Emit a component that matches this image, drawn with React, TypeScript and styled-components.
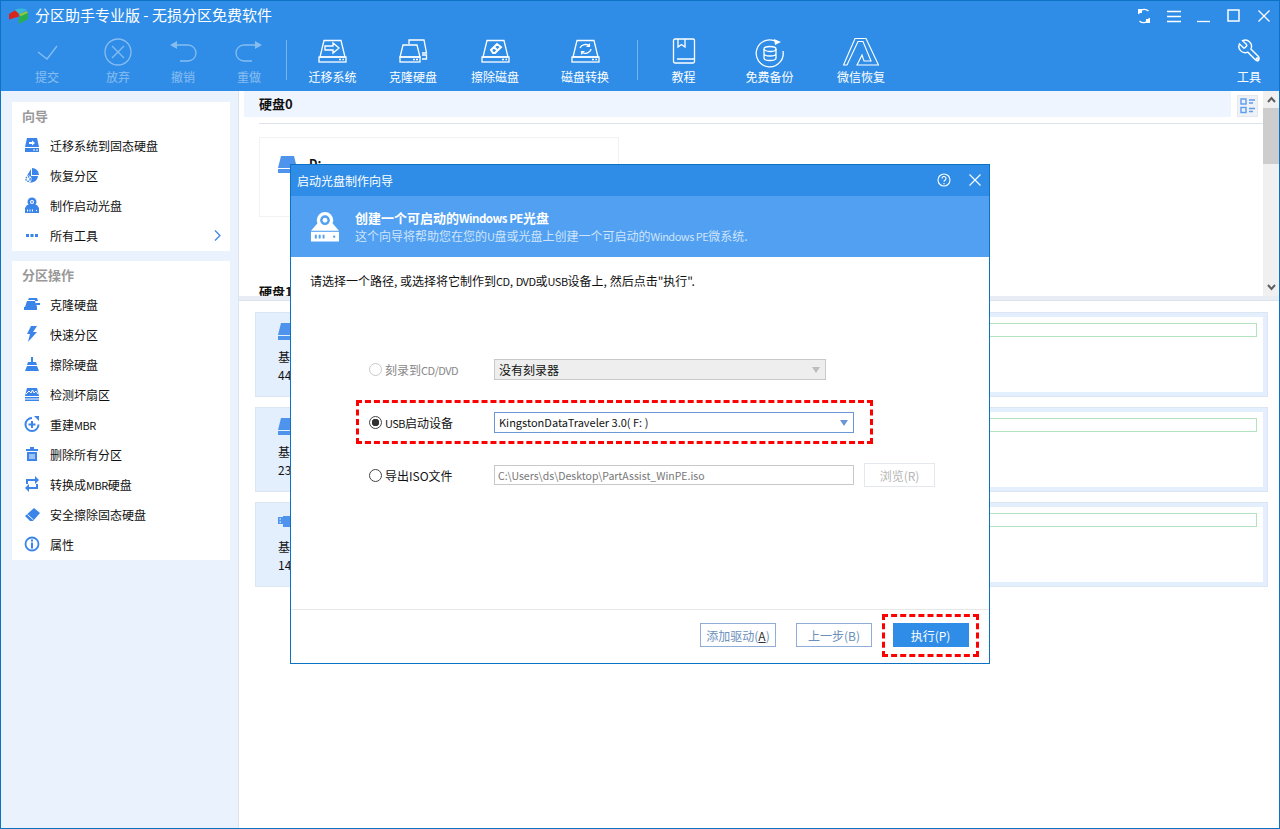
import * as React from 'react';
import styled, { createGlobalStyle } from 'styled-components';

const BLUE = '#2f8de8';
const ICON_BLUE = '#3a84ea';
const FONT = '"Noto Sans CJK SC", "Liberation Sans", sans-serif';

const GlobalStyle = createGlobalStyle`
    html, body { margin: 0; padding: 0; background: #fff; }
    * { box-sizing: border-box; }
    body { font-family: ${FONT}; font-size: 12px; color: #111; }
`;

// latin runs sit narrower than the CJK around them
const Lat = styled.span`
    font-size: 11px;
    letter-spacing: -0.5px;
`;

const mixed = (text: string) =>
    text.split(/([A-Za-z/]+(?: [A-Z]+)?)/).map((part, i) => (i % 2 ? <Lat key={i}>{part}</Lat> : part));

const Line: React.FC<{ w: number; h: number; sw?: number; children: React.ReactNode }> = ({ w, h, sw = 1.3, children }) => (
    <svg width={w} height={h} viewBox={`0 0 ${w} ${h}`} fill="none" stroke="#fff" strokeWidth={sw}>
        {children}
    </svg>
);

const DiskBase = () => (
    <>
        <path d="M6 1.5h17L27 18H2z" />
        <rect x="1" y="18" width="27" height="5" />
        <path d="M21 20.5h2M24.5 20.5h1.5" />
    </>
);

const toolbarGroups = [
    { label: '提交', w: 70, disabled: true, icon: <Line w={28} h={28}><path d="M1 11l9 7L20 5" transform="translate(4 3)" /></Line> },
    { label: '放弃', w: 72, disabled: true, icon: <Line w={28} h={28}><circle cx="14" cy="14" r="13" /><path d="M8 8l12 12M20 8L8 20" /></Line> },
    { label: '撤销', w: 58, disabled: true, icon: <Line w={28} h={28}><path d="M7 7h12a8 8 0 0 1 0 16h-8" /><path d="M8 3v8L1 7z" fill="#fff" stroke="none" /></Line> },
    { label: '重做', w: 74, disabled: true, icon: <Line w={28} h={28}><path d="M21 7H9a8 8 0 0 0 0 16h8" /><path d="M20 3v8l7-4z" fill="#fff" stroke="none" /></Line> },
];

const toolbarDisks = [
    { label: '迁移系统', w: 91, icon: <Line w={29} h={28}><g transform="translate(0 1)"><DiskBase /><path d="M7 7h8V4l6 5-6 5v-3H7z" /></g></Line> },
    { label: '克隆硬盘', w: 70, icon: <Line w={29} h={28}><path d="M10 6V2h15l2.5 13H23M23 17h4.500v4H23" /><path d="M4 7h14l3 12H1z" /><rect x="1" y="19" width="20" height="5" /><path d="M14 21.500h2M17 21.500h2" /></Line> },
    { label: '擦除磁盘', w: 94, icon: <Line w={29} h={28}><g transform="translate(0 1)"><DiskBase /><path d="M10 11l6-6 4 3-6 6h-2zM13 8l3 3" strokeWidth="2" /></g></Line> },
    { label: '磁盘转换', w: 86, icon: <Line w={29} h={28}><g transform="translate(0 1)"><DiskBase /><path d="M9 9a6 5 0 0 1 10-2M20 10a6 5 0 0 1-10 3" /><path d="M19 4v4h-4zM10 16v-4h4z" fill="#fff" stroke="none" /></g></Line> },
];

const toolbarExtras = [
    { label: '教程', w: 91, icon: <Line w={24} h={26}><path d="M3 1h18a1.5 1.5 0 0 1 1.5 1.5v21a1.5 1.5 0 0 1-1.5 1.5H3A1.5 1.5 0 0 1 1.5 23.500v-21A1.500 1.500 0 0 1 3 1z" /><path d="M6 1v8l3.500-2.500L13 9V1M5 21h17" /></Line> },
    { label: '免费备份', w: 81, icon: <Line w={30} h={30}><path d="M22 4a13.500 13.500 0 1 0 6 9" /><path d="M19 1l7 3-6 3z" fill="#fff" stroke="none" /><ellipse cx="15" cy="11" rx="6" ry="2.500" /><path d="M9 11v9c0 1.300 2.700 2.500 6 2.500s6-1.200 6-2.500v-9M9 15.500c0 1.300 2.700 2.500 6 2.500s6-1.200 6-2.500" /></Line> },
    { label: '微信恢复', w: 102, icon: <Line w={36} h={28} sw={1.1}><path d="M12 .5h11L35.500 27H14l5-10 2 6h7L20 3.500h-5L4 27H.5z" /></Line> },
];

const SideIcon: React.FC<{ children: React.ReactNode }> = ({ children }) => (
    <svg width="16" height="16" viewBox="0 0 16 16" fill={ICON_BLUE}>
        {children}
    </svg>
);

const guideRows = [
    { label: '迁移系统到固态硬盘', icon: <SideIcon><path d="M3 1h10l2 9H1z" /><rect x="1" y="11" width="14" height="4" /><path d="M5 5h3V3.500L11 6 8 8.500V7H5z" fill="#fff" /><path d="M9 13h2M12 13h2" stroke="#fff" /></SideIcon> },
    { label: '恢复分区', icon: <SideIcon><path d="M8 1a7 7 0 0 1 7 7H8z" /><path d="M7 2v7h7a7 7 0 0 1-13 3z" /><circle cx="4" cy="12" r="3.500" fill="#fff" /><circle cx="4" cy="12" r="2.200" fill="none" stroke={ICON_BLUE} strokeWidth="1.400" strokeDasharray="1.500 .8" /></SideIcon> },
    { label: '制作启动光盘', icon: <SideIcon><path d="M3 8h10l2 3H1z" /><circle cx="8" cy="5" r="4.500" /><circle cx="8" cy="5" r="2" fill="#fff" /><circle cx="8" cy="5" r=".9" /><rect x="1" y="11" width="14" height="5" /><path d="M3.500 12.500v2M6 12.500v2M8.500 12.500v2M12 13.500h1" stroke="#fff" /></SideIcon> },
    { label: '所有工具', icon: <SideIcon><rect x="2" y="7" width="3" height="3" /><rect x="6.500" y="7" width="3" height="3" /><rect x="11" y="7" width="3" height="3" /></SideIcon>, more: true },
];

const partitionRows = [
    { label: '克隆硬盘', icon: <SideIcon><path d="M5 2h8l1 3h-3V4H4z" /><path d="M3 5h8l2 6H1z" /><rect x="0" y="11" width="13" height="3" /><rect x="12" y="7" width="4" height="2" /></SideIcon> },
    { label: '快速分区', icon: <SideIcon><path d="M7 0h6L9 6h4L4 16l2-8H3z" /></SideIcon> },
    { label: '擦除硬盘', icon: <SideIcon><path d="M7 1h2v5h3l1 3H3l1-3h3z" /><path d="M3 10h10l2 5H1z" /></SideIcon> },
    { label: '检测坏扇区', icon: <SideIcon><path d="M3 2h10l2 8H1zM1 11h14v1.500H1zM1 13.500h14V15H1z" /><path d="M2 8l3-3 2 2 1.500-3L10 7l2-2 2 3" fill="none" stroke="#fff" /></SideIcon> },
    { label: '重建MBR', icon: <SideIcon><path d="M8 2a6.500 6.500 0 1 0 6.500 6.500" fill="none" stroke={ICON_BLUE} strokeWidth="2" /><path d="M10 0h5v5z" /><path d="M7 5h2v2.500h2.500v2H9V12H7V9.500H4.500v-2H7z" /></SideIcon> },
    { label: '删除所有分区', icon: <SideIcon><rect x="6" y="1" width="4" height="2" /><rect x="2" y="3" width="12" height="2" /><path d="M3 6h10v9H3z" /><path d="M6 8v5M8 8v5M10 8v5" stroke="#fff" /></SideIcon> },
    { label: '转换成MBR硬盘', icon: <SideIcon><path d="M2 3h9V0l4 4-4 4V5H4v3H2zM14 13H5v3l-4-4 4-4v3h7V8h2z" /></SideIcon> },
    { label: '安全擦除固态硬盘', icon: <SideIcon><path d="M10 2l6 5-7 8H6l-5-5z" /><path d="M3.500 8.500l6 5.500" stroke="#fff" fill="none" /></SideIcon> },
    { label: '属性', icon: <SideIcon><circle cx="8" cy="8" r="6.500" fill="none" stroke={ICON_BLUE} strokeWidth="1.800" /><rect x="7" y="3.500" width="2" height="2" /><rect x="7" y="6.500" width="2" height="6" /></SideIcon> },
];

const DiskGlyph: React.FC<{ usb?: boolean }> = ({ usb }) => (
    <GlyphSvg width="19" height="17" viewBox="0 0 19 17" fill="#4e93ec">
        {usb ? (
            <>
                <rect x="0" y="4" width="5" height="7" />
                <rect x="5" y="3" width="14" height="11" />
                <path d="M1.500 6h1.500M1.500 9h1.500" stroke="#fff" />
            </>
        ) : (
            <>
                <path d="M3 0h13l3 12H0z" />
                <rect x="0" y="13" width="19" height="4" />
            </>
        )}
    </GlyphSvg>
);

const bottomDisks = [
    { type: '基本GPT', size: '447.13GB' },
    { type: '基本MBR', size: '232.89GB' },
    { type: '基本MBR', size: '14.41GB', usb: true },
];

const App: React.FC = () => (
    <Window>
        <GlobalStyle />
        <Header>
            <TitleBar>
                <Logo width="21" height="16" viewBox="0 0 21 16">
                    <path d="M6 3l4-1.500 1 7-10 3V6z" fill="#d9261c" />
                    <path d="M7 2c3-2 9-2 12 0l-8 4z" fill="#39b7d8" />
                    <path d="M11 6l8-3 1 2-7 4z" fill="#8cc63f" />
                    <path d="M11 9l9-4v6l-9 5z" fill="#27ae4f" />
                </Logo>
                <AppTitle>分区助手专业版 - 无损分区免费软件</AppTitle>
                <WindowControls>
                    <ControlSlot>
                        <Line w={16} h={16}>
                            <path d="M2.500 6a6 6 0 0 1 10-3M13.500 10a6 6 0 0 1-10 3" />
                            <path d="M2 1h4v4H2zM10 11h4v4h-4z" fill="#fff" stroke="none" />
                        </Line>
                    </ControlSlot>
                    <ControlSlot>
                        <Line w={14} h={14}><path d="M0 2.500h14M0 7.500h14M0 12.500h14" /></Line>
                    </ControlSlot>
                    <ControlSlot>
                        <Line w={14} h={14}><path d="M0 12.500h13" /></Line>
                    </ControlSlot>
                    <ControlSlot>
                        <Line w={14} h={14} sw={1.5}><rect x="1" y="1" width="11" height="11" /></Line>
                    </ControlSlot>
                    <ControlSlot>
                        <Line w={12} h={12}><path d="M.5.500l11 11M11.500.500l-11 11" /></Line>
                    </ControlSlot>
                </WindowControls>
            </TitleBar>
            <Toolbar>
                {toolbarGroups.map((t) => (
                    <ToolItem key={t.label} $w={t.w} $disabled={t.disabled}>
                        <ToolIcon>{t.icon}</ToolIcon>
                        {t.label}
                    </ToolItem>
                ))}
                <ToolDivider />
                {toolbarDisks.map((t) => (
                    <ToolItem key={t.label} $w={t.w}>
                        <ToolIcon>{t.icon}</ToolIcon>
                        {t.label}
                    </ToolItem>
                ))}
                <ToolDivider $gap={9} />
                {toolbarExtras.map((t) => (
                    <ToolItem key={t.label} $w={t.w}>
                        <ToolIcon>{t.icon}</ToolIcon>
                        {t.label}
                    </ToolItem>
                ))}
                <ToolSpacer />
                <ToolItem $w={60}>
                    <ToolIcon>
                        <Line w={26} h={26}>
                            <g transform="translate(26 0) scale(-1.05 1.05)">
                                <path d="M14.700 6.300a1 1 0 0 0 0 1.400l1.600 1.600a1 1 0 0 0 1.400 0l3.770-3.770a6 6 0 0 1-7.940 7.940l-6.910 6.910a2.120 2.120 0 0 1-3-3l6.910-6.910a6 6 0 0 1 7.940-7.940l-3.760 3.760z" />
                            </g>
                            <circle cx="21.500" cy="21.500" r="1.500" />
                        </Line>
                    </ToolIcon>
                    工具
                </ToolItem>
            </Toolbar>
        </Header>

        <Main>
            <Sidebar>
                <SidePanel>
                    <SideHeading>向导</SideHeading>
                    {guideRows.map((r) => (
                        <SideRow key={r.label}>
                            {r.icon}
                            <span>{mixed(r.label)}</span>
                            {r.more && (
                                <Chevron width="7" height="11" viewBox="0 0 7 11">
                                    <path d="M1 .500l5 5-5 5" fill="none" stroke={ICON_BLUE} strokeWidth="1.200" />
                                </Chevron>
                            )}
                        </SideRow>
                    ))}
                </SidePanel>
                <SidePanel>
                    <SideHeading>分区操作</SideHeading>
                    {partitionRows.map((r) => (
                        <SideRow key={r.label}>
                            {r.icon}
                            <span>{mixed(r.label)}</span>
                        </SideRow>
                    ))}
                </SidePanel>
            </Sidebar>

            <Content>
                <TopPane>
                    <TopScroll>
                        <DiskHeader>
                            <DiskStrip>
                                <DiskTitle>硬盘0</DiskTitle>
                            </DiskStrip>
                            <ViewToggle>
                                <svg width="16" height="16" viewBox="0 0 16 16" fill="none" stroke="#5b9bf0" strokeWidth="1.400">
                                    <rect x="1" y="1" width="5" height="5" />
                                    <rect x="1" y="9.500" width="5" height="5" />
                                    <path d="M9 2h6M9 5h4M9 10.500h6M9 13.500h4" />
                                </svg>
                            </ViewToggle>
                        </DiskHeader>
                        <StripRule />
                        <VolumeCard>
                            <DiskGlyph />
                            <VolumeName>D:</VolumeName>
                        </VolumeCard>
                        <SecondTitle>硬盘1</SecondTitle>
                    </TopScroll>
                    <ScrollBar>
                        <ScrollArrow>
                            <svg width="9" height="7" viewBox="0 0 9 7"><path d="M1 6l3.500-4L8 6" fill="none" stroke="#606060" strokeWidth="2" /></svg>
                        </ScrollArrow>
                        <ScrollThumb />
                        <ScrollArrow>
                            <svg width="9" height="7" viewBox="0 0 9 7"><path d="M1 1l3.500 4L8 1" fill="none" stroke="#606060" strokeWidth="2" /></svg>
                        </ScrollArrow>
                    </ScrollBar>
                </TopPane>
                <Splitter />
                <BottomPane>
                    {bottomDisks.map((d, i) => (
                        <DiskCard key={i}>
                            <DiskInfo>
                                <DiskGlyph usb={d.usb} />
                                <DiskType>{d.type}</DiskType>
                                <DiskSize>{d.size}</DiskSize>
                            </DiskInfo>
                            <DiskBody>
                                <PartitionBar />
                            </DiskBody>
                        </DiskCard>
                    ))}
                </BottomPane>
            </Content>
        </Main>

        <Dialog>
            <DialogTitle>
                启动光盘制作向导
                <DialogControls>
                    <svg width="14" height="14" viewBox="0 0 14 14" fill="none" stroke="#fff" strokeWidth="1.100">
                        <circle cx="7" cy="7" r="6" />
                        <path d="M5 5.500a2 2 0 1 1 3 1.700c-.7.400-1 .8-1 1.500" />
                        <path d="M7 10v1.300" />
                    </svg>
                    <svg width="12" height="12" viewBox="0 0 12 12" fill="none" stroke="#fff" strokeWidth="1.100">
                        <path d="M.5.500l11 11M11.500.500l-11 11" />
                    </svg>
                </DialogControls>
            </DialogTitle>
            <DialogBanner>
                <svg width="30" height="31" viewBox="0 0 31 31" fill="#fff">
                    <path d="M8 12h15l7 8H1z" />
                    <circle cx="15.500" cy="9" r="8.500" fill="#fff" />
                    <circle cx="15.500" cy="9" r="5" fill="#51a0f2" />
                    <circle cx="15.500" cy="9" r="2.500" fill="#fff" />
                    <rect x="1" y="21" width="29" height="10" />
                    <path d="M6 24v4M10 24v4M14 24v4" stroke="#51a0f2" strokeWidth="2" />
                    <circle cx="25" cy="26" r="1.200" fill="#51a0f2" />
                </svg>
                <BannerText>
                    <BannerTitle>{mixed('创建一个可启动的Windows PE光盘')}</BannerTitle>
                    <BannerSub>{mixed('这个向导将帮助您在您的U盘或光盘上创建一个可启动的Windows PE微系统.')}</BannerSub>
                </BannerText>
            </DialogBanner>
            <DialogBody>
                <Intro>{mixed('请选择一个路径, 或选择将它制作到CD, DVD或USB设备上, 然后点击"执行".')}</Intro>
                <OptionRow $h={21} $top={69}>
                    <Radio $disabled />
                    <OptionLabel $disabled>{mixed('刻录到CD/DVD')}</OptionLabel>
                    <SelectBox $w={332} $disabled>
                        没有刻录器
                        <Caret $color="#bdbdbd" />
                    </SelectBox>
                </OptionRow>
                <OptionRow $h={44} $top={20} $highlight>
                    <Radio $checked />
                    <OptionLabel>{mixed('USB启动设备')}</OptionLabel>
                    <SelectBox $w={360} $active>
                        <DeviceName>KingstonDataTraveler 3.0( F: )</DeviceName>
                        <Caret $color="#6b97d8" />
                    </SelectBox>
                </OptionRow>
                <OptionRow $h={24} $top={19}>
                    <Radio />
                    <OptionLabel>导出ISO文件</OptionLabel>
                    <PathInput>C:\Users\ds\Desktop\PartAssist_WinPE.iso</PathInput>
                    <BrowseButton>浏览(R)</BrowseButton>
                </OptionRow>
            </DialogBody>
            <DialogFooter>
                <OutlineButton>添加驱动(<u>A</u>)</OutlineButton>
                <OutlineButton>上一步(B)</OutlineButton>
                <ExecuteFrame>
                    <ExecuteButton>执行(P)</ExecuteButton>
                </ExecuteFrame>
            </DialogFooter>
        </Dialog>
    </Window>
);

const Window = styled.div`
    position: relative;
    width: 1280px;
    height: 829px;
    display: flex;
    flex-direction: column;
    overflow: hidden;
    background: #fff;
    border: 1px solid #0b72c4;
`;

const Header = styled.header`
    height: 90px;
    flex: none;
    background: ${BLUE};
    display: flex;
    flex-direction: column;
`;

const TitleBar = styled.div`
    height: 30px;
    flex: none;
    display: flex;
    align-items: center;
    padding-left: 7px;
`;

const Logo = styled.svg`
    flex: none;
`;

const AppTitle = styled.div`
    margin-left: 6px;
    padding-bottom: 4px;
    font-size: 15px;
    color: #fff;
`;

const WindowControls = styled.div`
    margin-left: auto;
    display: flex;
    align-items: center;
`;

const ControlSlot = styled.div`
    width: 30px;
    display: flex;
    align-items: center;
    justify-content: center;
`;

const Toolbar = styled.div`
    flex: 1;
    display: flex;
    padding-left: 11px;
`;

const ToolItem = styled.div<{ $w: number; $disabled?: boolean }>`
    width: ${(p) => p.$w}px;
    flex: none;
    display: flex;
    flex-direction: column;
    align-items: center;
    color: #fff;
    font-size: 12px;
    line-height: 16px;
    opacity: ${(p) => (p.$disabled ? 0.42 : 1)};
`;

const ToolIcon = styled.div`
    height: 38px;
    padding-top: 7px;
    display: flex;
    align-items: flex-start;
    justify-content: center;
`;

const ToolDivider = styled.div<{ $gap?: number }>`
    width: 1px;
    height: 40px;
    margin-top: 9px;
    margin-left: ${(p) => p.$gap ?? 0}px;
    background: rgba(255, 255, 255, 0.35);
    flex: none;
`;

const ToolSpacer = styled.div`
    flex: 1;
`;

const Main = styled.div`
    flex: 1;
    min-height: 0;
    display: flex;
`;

const Sidebar = styled.aside`
    width: 238px;
    flex: none;
    background: #eaf2fd;
    border-right: 1px solid #dde4ee;
    padding: 11px 8px 0 11px;
    display: flex;
    flex-direction: column;
    gap: 10px;
`;

const SidePanel = styled.section`
    background: #fff;
`;

const SideHeading = styled.div`
    height: 29px;
    padding: 0 0 2px 10px;
    display: flex;
    align-items: center;
    font-size: 13px;
    font-weight: 700;
    color: #999;
`;

const SideRow = styled.div`
    height: 30px;
    padding: 0 0 2px 12px;
    display: flex;
    align-items: center;
    gap: 10px;
    font-size: 12px;
    color: #111;
`;

const Chevron = styled.svg`
    margin-left: auto;
    margin-right: 9px;
`;

const Content = styled.div`
    flex: 1;
    min-width: 0;
    display: flex;
    flex-direction: column;
`;

const TopPane = styled.div`
    height: 205px;
    flex: none;
    display: flex;
    overflow: hidden;
`;

const TopScroll = styled.div`
    flex: 1;
    min-width: 0;
    padding-left: 5px;
`;

const DiskHeader = styled.div`
    height: 26px;
    display: flex;
`;

const DiskStrip = styled.div`
    flex: 1;
    padding-left: 15px;
    display: flex;
    align-items: center;
    background: #eef5fe;
`;

const DiskTitle = styled.div`
    font-weight: 700;
    font-size: 13px;
    line-height: 18px;
`;

const ViewToggle = styled.div`
    width: 21px;
    height: 22px;
    margin: 4px 5px 0 6px;
    background: #eef1f6;
    border: 1px solid #e4e8ee;
    display: flex;
    align-items: center;
    justify-content: center;
`;

const StripRule = styled.div`
    height: 1px;
    margin: 6px 0 0 15px;
    background: #dfe3ea;
`;

const VolumeCard = styled.div`
    width: 360px;
    height: 80px;
    margin: 13px 0 0 15px;
    padding: 18px 0 0 18px;
    border: 1px solid #f2f2f2;
    display: flex;
    align-items: flex-start;
    gap: 12px;
`;

const VolumeName = styled.div`
    font-weight: 700;
    font-size: 12px;
    line-height: 14px;
`;

const SecondTitle = styled(DiskTitle)`
    margin: 66px 0 0 15px;
`;

const ScrollBar = styled.div`
    width: 16px;
    flex: none;
    background: #f0f0f0;
    display: flex;
    flex-direction: column;
`;

const ScrollArrow = styled.div`
    height: 17px;
    flex: none;
    display: flex;
    align-items: center;
    justify-content: center;
`;

const ScrollThumb = styled.div`
    height: 56px;
    background: #cdcdcd;
    margin-bottom: auto;
`;

const Splitter = styled.div`
    height: 5px;
    flex: none;
    background: #e8edf3;
    border-bottom: 1px solid #dbe3ee;
`;

const BottomPane = styled.div`
    flex: 1;
    padding: 11px 11px 0 16px;
    display: flex;
    flex-direction: column;
    gap: 10px;
`;

const DiskCard = styled.div`
    height: 85px;
    flex: none;
    display: flex;
    border: 1px solid #dce6f2;
    background: #e4effd;
`;

const DiskInfo = styled.div`
    width: 120px;
    flex: none;
    padding: 10px 0 0 22px;
`;

const GlyphSvg = styled.svg`
    display: block;
    flex: none;
`;

const DiskType = styled.div`
    margin-top: 8px;
    line-height: 18px;
    font-size: 12px;
`;

const DiskSize = styled.div`
    line-height: 18px;
    font-size: 12px;
`;

const DiskBody = styled.div`
    flex: 1;
    margin: 4px 4px 4px 0;
    padding: 6px;
    background: #fff;
`;

const PartitionBar = styled.div`
    height: 14px;
    border: 1px solid #b2e3bf;
`;

const Dialog = styled.div`
    position: absolute;
    left: 289px;
    top: 163px;
    width: 700px;
    height: 500px;
    background: #fff;
    border: 1px solid #0b72c4;
    display: flex;
    flex-direction: column;
`;

const DialogTitle = styled.div`
    height: 31px;
    flex: none;
    padding-left: 6px;
    background: ${BLUE};
    color: #fff;
    font-size: 12px;
    display: flex;
    align-items: center;
`;

const DialogControls = styled.div`
    margin-left: auto;
    padding: 0 8px 1px 0;
    display: flex;
    align-items: center;
    gap: 18px;
`;

const DialogBanner = styled.div`
    height: 61px;
    flex: none;
    background: #51a0f2;
    padding-left: 19px;
    display: flex;
    align-items: center;
    gap: 15px;
`;

const BannerText = styled.div`
    display: flex;
    flex-direction: column;
    color: #fff;
    font-size: 12px;
    line-height: 18px;
`;

const BannerTitle = styled.div`
    height: 18px;
    font-size: 13px;
    font-weight: 700;

    ${Lat} {
        font-size: 11.500px;
    }
`;

const BannerSub = styled.div`
    height: 18px;
    color: #cfe4fb;
`;

const DialogBody = styled.div`
    flex: 1;
    padding: 15px 0 0 19px;
`;

const Intro = styled.div`
    height: 18px;
    font-size: 12px;
    line-height: 18px;
`;

const OptionRow = styled.div<{ $h: number; $top: number; $highlight?: boolean }>`
    width: 517px;
    height: ${(p) => p.$h}px;
    margin: ${(p) => p.$top}px 0 0 46px;
    padding-left: ${(p) => (p.$highlight ? 10 : 13)}px;
    display: flex;
    align-items: center;
    border: ${(p) => (p.$highlight ? '3px dashed #f00' : 'none')};
    white-space: nowrap;
`;

const Radio = styled.span<{ $checked?: boolean; $disabled?: boolean }>`
    width: 13px;
    height: 13px;
    flex: none;
    border-radius: 50%;
    border: 1px solid ${(p) => (p.$disabled ? '#c9c9c9' : '#444')};
    background: ${(p) => (p.$checked ? 'radial-gradient(circle, #333 0 3.500px, #fff 4px)' : '#fff')};
`;

const OptionLabel = styled.span<{ $disabled?: boolean }>`
    width: 109px;
    margin-left: 3px;
    flex: none;
    font-size: 12px;
    color: ${(p) => (p.$disabled ? '#888' : '#111')};
`;

const SelectBox = styled.div<{ $w: number; $disabled?: boolean; $active?: boolean }>`
    position: relative;
    width: ${(p) => p.$w}px;
    height: 21px;
    flex: none;
    padding-left: 4px;
    display: flex;
    align-items: center;
    font-size: 12px;
    background: ${(p) => (p.$disabled ? '#eeeeee' : '#fff')};
    border: 1px solid ${(p) => (p.$active ? '#6b97d8' : '#c8c8c8')};
`;

const DeviceName = styled.span`
    font-size: 11px;
`;

const Caret = styled.span<{ $color: string }>`
    position: absolute;
    right: 5px;
    top: 7px;
    border-left: 4.500px solid transparent;
    border-right: 4.500px solid transparent;
    border-top: 6px solid ${(p) => p.$color};
`;

const PathInput = styled.div`
    width: 360px;
    height: 20px;
    flex: none;
    padding-left: 3px;
    display: flex;
    align-items: center;
    font-size: 10.500px;
    color: #777;
    border: 1px solid #c8c8c8;
`;

const BrowseButton = styled.div`
    width: 71px;
    height: 24px;
    margin-left: 10px;
    flex: none;
    display: flex;
    align-items: center;
    justify-content: center;
    font-size: 12px;
    color: #b5b5b5;
    border: 1px solid #e4e8ee;
`;

const DialogFooter = styled.div`
    height: 54px;
    flex: none;
    padding: 0 10px 3px 0;
    border-top: 1px solid #e8e8e8;
    display: flex;
    align-items: center;
    justify-content: flex-end;
    gap: 20px;
`;

const OutlineButton = styled.div`
    width: 76px;
    height: 24px;
    display: flex;
    align-items: center;
    justify-content: center;
    font-size: 12px;
    color: #6b8fbd;
    border: 1px solid #8fadd6;

    u {
        color: #333;
    }
`;

const ExecuteFrame = styled.div`
    width: 97px;
    height: 43px;
    margin-left: -10px;
    border: 3px dashed #f00;
    display: flex;
    align-items: center;
    justify-content: center;
`;

const ExecuteButton = styled.div`
    width: 76px;
    height: 24px;
    background: ${BLUE};
    color: #fff;
    font-size: 12px;
    display: flex;
    align-items: center;
    justify-content: center;
`;

export default App;
